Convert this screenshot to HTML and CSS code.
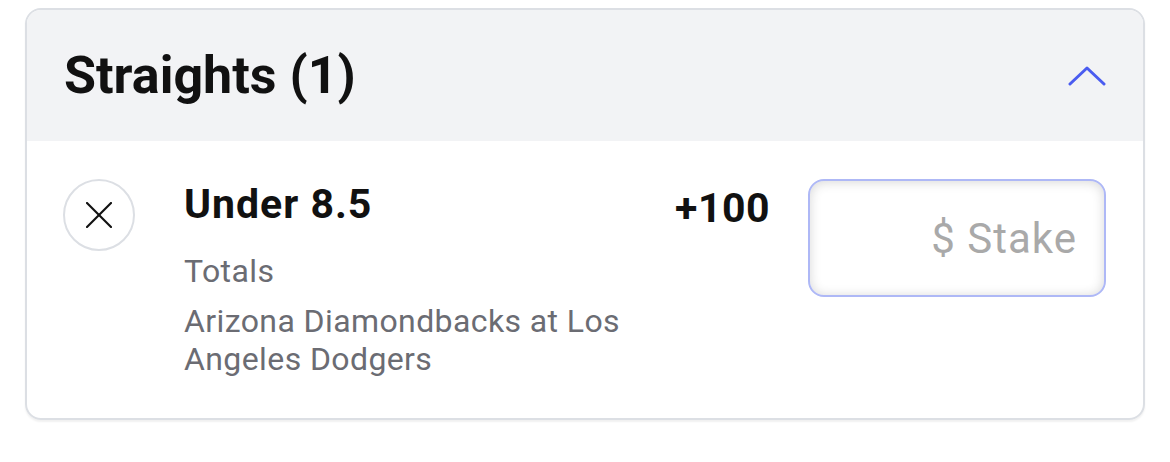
FILE: index.html
```html
<!DOCTYPE html>
<html lang="en">
<head>
    <meta charset="UTF-8">
    <meta name="viewport" content="width=device-width, initial-scale=1.0">
    <title>Bet Slip</title>
    <link rel="stylesheet" href="styles.css">
</head>
<body>

    <div class="slip">
        <!-- Header with collapse toggle -->
        <div class="slip-header">
            <h2>Straights (1)</h2>
            <button class="toggle" type="button" aria-label="Collapse">
                <svg width="38" height="20" viewBox="0 0 38 20" fill="none" stroke="#4a5cf0" stroke-width="3" stroke-linecap="round" stroke-linejoin="round">
                    <polyline points="2,18 19,2 36,18"/>
                </svg>
            </button>
        </div>

        <div class="bet">
            <button class="remove" type="button" aria-label="Remove">
                <svg width="26" height="26" viewBox="0 0 26 26" fill="none" stroke="#111" stroke-width="2.2" stroke-linecap="round">
                    <line x1="1" y1="1" x2="25" y2="25"/>
                    <line x1="25" y1="1" x2="1" y2="25"/>
                </svg>
            </button>

            <div class="bet-info">
                <div class="selection">Under 8.5</div>
                <div class="market">Totals</div>
                <div class="event">Arizona Diamondbacks at Los Angeles Dodgers</div>
            </div>

            <div class="odds">+100</div>

            <input class="stake" type="text" placeholder="$ Stake">
        </div>
    </div>

</body>
</html>
```

FILE: styles.css
```css
body {
    margin: 0;
    padding: 8px 25px;
    font-family: Roboto, "Liberation Sans", sans-serif;
    background-color: #ffffff;
    color: #111;
}

.slip {
    width: 1120px;
    box-sizing: border-box;
    border: 2px solid #dcdfe4;
    border-radius: 16px;
    overflow: hidden;
    box-shadow: 0 2px 2px rgba(0, 0, 0, 0.06);
}

.slip-header {
    display: flex;
    justify-content: space-between;
    align-items: center;
    height: 131px;
    padding: 0 37px;
    background-color: #f2f3f5;
}

h2 {
    margin: 0;
    font-size: 52px;
    font-weight: 700;
}

.toggle {
    background: none;
    border: none;
    padding: 0;
    cursor: pointer;
    display: flex;
}

.bet {
    display: flex;
    align-items: flex-start;
    padding: 38px 37px 40px 36px;
}

.remove {
    flex: none;
    width: 72px;
    height: 72px;
    border-radius: 50%;
    border: 2px solid #dcdfe4;
    background: #fff;
    display: flex;
    align-items: center;
    justify-content: center;
    padding: 0;
    cursor: pointer;
}

.bet-info {
    margin-left: 49px;
    width: 460px;
}

.selection {
    font-size: 41px;
    font-weight: 700;
    line-height: 48px;
    letter-spacing: 1px;
    margin-top: 1px;
}

.market, .event {
    font-size: 32px;
    line-height: 38px;
    letter-spacing: 0.4px;
    color: #6b6c73;
}

.market {
    margin-top: 24px;
}

.event {
    margin-top: 12px;
}

.odds {
    margin-left: auto;
    margin-top: 5px;
    font-size: 41px;
    font-weight: 700;
    line-height: 48px;
    letter-spacing: 0.5px;
}

.stake {
    flex: none;
    margin-left: 38px;
    width: 298px;
    height: 118px;
    box-sizing: border-box;
    border: 2px solid #aeb8f6;
    border-radius: 16px;
    padding: 0 27px;
    text-align: right;
    font-family: inherit;
    font-size: 42px;
    letter-spacing: 1px;
    background: #fff;
    box-shadow: inset 0 1px 12px rgba(0, 0, 0, 0.16);
    outline: none;
}

.stake::placeholder {
    color: #a9a9a9;
}
```
